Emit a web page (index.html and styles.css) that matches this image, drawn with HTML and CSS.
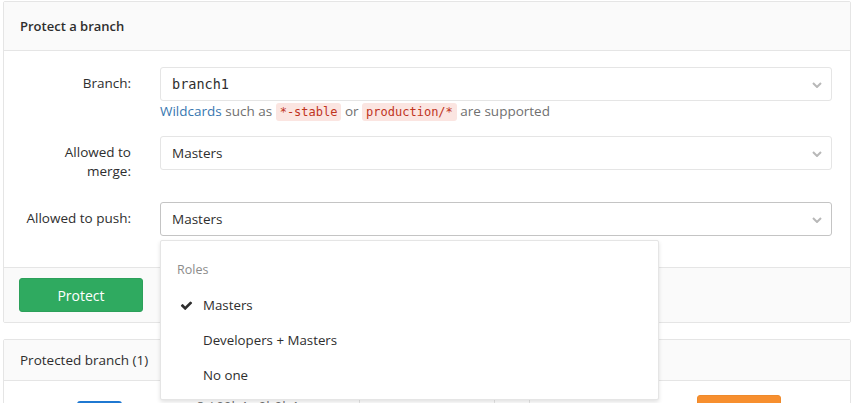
FILE: index.html
```html
<!DOCTYPE html>
<html lang="en">
<head>
<meta charset="utf-8">
<title>Protected branches</title>
<link rel="stylesheet" href="styles.css">
</head>
<body>
<div class="page">
  <form class="panel">
    <div class="panel-heading"><h3 class="panel-title">Protect a branch</h3></div>
    <div class="panel-body">
      <div class="form-group">
        <label class="control-label">Branch:</label>
        <div class="field">
          <div class="select mono">branch1<svg class="chev" viewBox="0 0 10 6"><path d="M1 1l4 4 4-4"/></svg></div>
          <p class="help"><a href="#">Wildcards</a> such as <code>*-stable</code> or <code>production/*</code> are supported</p>
        </div>
      </div>
      <div class="form-group">
        <label class="control-label tall">Allowed to<br>merge:</label>
        <div class="field">
          <div class="select">Masters<svg class="chev" viewBox="0 0 10 6"><path d="M1 1l4 4 4-4"/></svg></div>
        </div>
      </div>
      <div class="form-group last">
        <label class="control-label">Allowed to push:</label>
        <div class="field">
          <div class="select open">Masters<svg class="chev" viewBox="0 0 10 6"><path d="M1 1l4 4 4-4"/></svg></div>
          <div class="dropdown">
            <div class="dropdown-header">Roles</div>
            <ul class="dropdown-list">
              <li class="item active"><svg class="check" viewBox="0 0 1792 1792"><path d="M1671 566q0 40-28 68l-724 724-136 136q-28 28-68 28t-68-28l-136-136-362-362q-28-28-28-68t28-68l136-136q28-28 68-28t68 28l294 295 656-657q28-28 68-28t68 28l136 136q28 28 28 68z"/></svg>Masters</li>
              <li class="item">Developers + Masters</li>
              <li class="item">No one</li>
            </ul>
          </div>
        </div>
      </div>
    </div>
    <div class="panel-footer"><button type="button" class="btn btn-create">Protect</button></div>
  </form>

  <div class="panel second">
    <div class="panel-heading small"><span class="panel-title normal">Protected branch (1)</span></div>
    <div class="table-row">
      <div class="cell c-branch"><span class="badge-btn"></span></div>
      <div class="cell c-commit"><span class="commit">c8 / 09b4 a9b0b4a</span></div>
      <div class="cell c-merge"><div class="mini-select"></div></div>
      <div class="cell c-extra"></div>
      <div class="cell c-push"><div class="mini-select"></div></div>
      <div class="cell c-action"><button type="button" class="btn btn-warning">Unprotect</button></div>
    </div>
  </div>
</div>
</body>
</html>
```

FILE: styles.css
```css
* { box-sizing: border-box; }
html, body { margin: 0; padding: 0; background: #fff; overflow: hidden; }
body {
  font-family: "Open Sans", "Noto Sans", "DejaVu Sans", sans-serif;
  font-size: 13.5px;
  color: #2e2e2e;
  line-height: 20px;
}
.page { padding: 1px 10px 0 3px; height: 403px; overflow: hidden; }

.panel {
  display: block;
  border: 1px solid #e5e5e5;
  border-radius: 2px;
  background: #fff;
  margin: 0;
}
.panel-heading {
  background: #fafafa;
  border-bottom: 1px solid #e5e5e5;
  height: 49px;
  padding: 0 16px;
  display: flex;
  align-items: center;
}
.panel-heading.small { height: 41px; }
.panel-title { margin: 0; font-size: 13px; font-weight: 600; line-height: 20px; }
.panel-title.normal { font-weight: 400; font-size: 13.5px; }

.panel-body { padding: 16px 18px 31px 0; }
.form-group {
  display: grid;
  grid-template-columns: 127px 1fr;
  column-gap: 29px;
  margin-bottom: 15px;
}
.form-group.last { margin-bottom: 0; }
.control-label {
  text-align: right;
  padding-top: 7px;
  line-height: 19px;
}
.control-label.tall { padding-bottom: 6px; }
.field { position: relative; }

.select {
  position: relative;
  height: 34px;
  border: 1px solid #e5e5e5;
  border-radius: 3px;
  padding: 0 30px 0 11px;
  line-height: 32px;
  background: #fff;
  color: #2e2e2e;
}
.select.mono {
  font-family: "DejaVu Sans Mono", "Liberation Mono", monospace;
  font-size: 13.5px;
}
.select.open { border-color: #c4c4c4; }
.chev {
  position: absolute;
  right: 9px;
  top: 14px;
  width: 10px;
  height: 6px;
  fill: none;
  stroke: #b8b8b8;
  stroke-width: 2;
}
.help {
  margin: 0;
  height: 20px;
  line-height: 20px;
  color: #707070;
}
.help a { color: #3777b0; text-decoration: none; }
code {
  font-family: "DejaVu Sans Mono", "Liberation Mono", monospace;
  font-size: 12px;
  line-height: 1;
  color: #c0341d;
  background: #fbe5e1;
  padding: 2px 4px;
  border-radius: 3px;
}

.dropdown {
  position: absolute;
  top: 38px;
  left: 0;
  width: 499px;
  height: 160px;
  background: #fff;
  border: 1px solid #e5e5e5;
  border-radius: 2px;
  box-shadow: 0 2px 4px rgba(0,0,0,0.12);
  padding: 11px 0 5px;
  z-index: 10;
}
.dropdown-header {
  padding: 8px 16px;
  color: #8c8c8c;
  font-size: 12.5px;
  line-height: 20px;
}
.dropdown-list { list-style: none; margin: 0; padding: 0; }
.item {
  position: relative;
  padding: 8px 16px 8px 42px;
  line-height: 19px;
  color: #2e2e2e;
  font-size: 13.3px;
}
.check {
  position: absolute;
  left: 19px;
  top: 11px;
  width: 13px;
  height: 13px;
  fill: #2e2e2e;
}

.panel-footer {
  background: #fafafa;
  border-top: 1px solid #e5e5e5;
  padding: 10px 15px;
}
.btn {
  font-family: inherit;
  font-size: 13.5px;
  height: 34px;
  border-radius: 3px;
  border: 1px solid transparent;
  padding: 0 12px;
  cursor: pointer;
}
.btn-create {
  width: 124px;
  background: #2faa60;
  border-color: #2ca05a;
  color: #fff;
  font-size: 14px;
}

.second { margin-top: 16px; }
.table-row {
  display: flex;
  align-items: flex-start;
  padding: 0 16px;
  height: 60px;
}
.cell { padding-top: 14px; }
.c-branch { width: 170px; padding-top: 20px; padding-left: 57px; }
.badge-btn { display: block; width: 45px; height: 20px; background: #1f78d1; border-radius: 3px; }
.c-commit { width: 169px; padding-top: 15px; color: #707070; }
.c-merge { width: 135px; border-left: 1px solid #e5e5e5; height: 60px; margin-top: 19px; }
.c-extra { width: 35px; border-left: 1px solid #e5e5e5; height: 60px; margin-top: 19px; }
.c-push { width: 152px; border-left: 1px solid #e5e5e5; height: 60px; margin-top: 19px; }
.mini-select { height: 34px; border: 1px solid #e5e5e5; border-radius: 3px; }
.c-action { padding-left: 16px; }
.btn-warning {
  width: 84px;
  background: #f78f2f;
  border-color: #ef8a2b;
  color: #fff;
}
```
